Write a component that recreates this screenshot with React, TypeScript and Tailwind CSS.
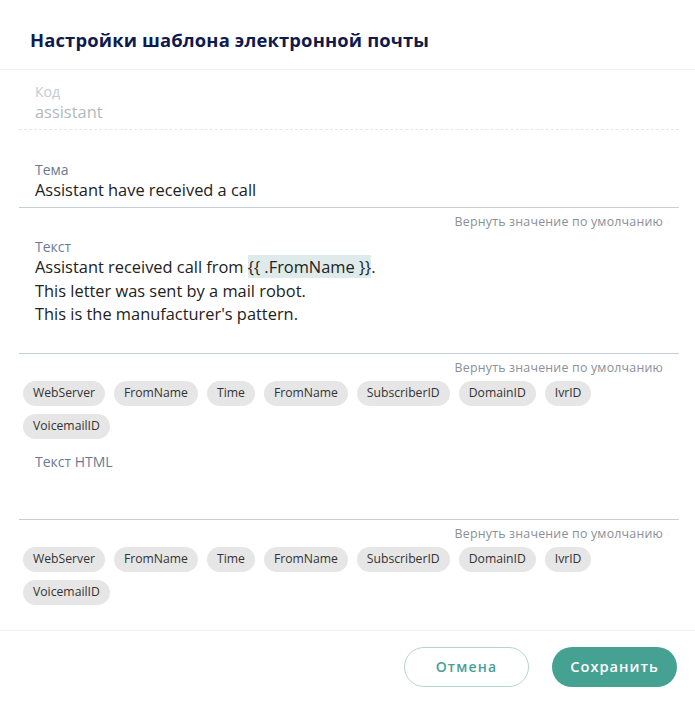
import React from "react";

const tags = ["WebServer", "FromName", "Time", "FromName", "SubscriberID", "DomainID", "IvrID", "VoicemailID"];

function Chips() {
  return (
    <div className="flex flex-wrap gap-x-[9px] gap-y-[8px] px-[4px] pt-[5px]">
      {tags.map((t, i) => (
        <span
          key={i}
          className="h-[25px] px-[10px] rounded-full bg-[#e6e6e6] text-[12.2px] text-[#333] flex items-center leading-none"
        >
          {t}
        </span>
      ))}
    </div>
  );
}

function Reset() {
  return (
    <div className="text-right pr-[16px] pt-[6px] text-[12.4px] leading-[16px] text-[#8a9099] tracking-[0.2px]">
      Вернуть значение по умолчанию
    </div>
  );
}

export default function App() {
  return (
    <div className="w-[695px] h-[704px] bg-white flex flex-col" style={{ fontFamily: '"Open Sans", "Noto Sans", sans-serif' }}>
      <div className="h-[70px] border-b border-[#eef0f2] flex items-center pl-[30px] pt-[10px]">
        <h1 className="text-[18.4px] font-bold text-[#0f1a4d] tracking-[0.15px]">Настройки шаблона электронной почты</h1>
      </div>
      <div className="flex-1 pl-[19px] pr-[16px]">
        <div className="px-[16px] pt-[13px] pb-[6px] border-b border-dashed border-[#e3e6ea]">
          <div className="text-[14px] leading-[18px] text-[#c3cad4]">Код</div>
          <div className="text-[16.4px] leading-[22px] text-[#b5b8bc]">assistant</div>
        </div>
        <div className="mt-[31px] px-[16px] pb-[6px] border-b border-[#c8ced6]">
          <div className="text-[14px] leading-[18px] text-[#6c7a96]">Тема</div>
          <div className="text-[16.4px] leading-[22px] text-[#222]">Assistant have received a call</div>
        </div>
        <Reset />
        <div className="px-[16px] pt-[9px] pb-[27px] border-b border-[#c8ced6]">
          <div className="text-[14px] leading-[16px] text-[#6c7a96]">Текст</div>
          <div className="text-[16.4px] leading-[23.5px] text-[#222]">
            <div>
              Assistant received call from <span className="bg-[#deebea]">{"{{ .FromName }}"}</span>.
            </div>
            <div>This letter was sent by a mail robot.</div>
            <div>This is the manufacturer's pattern.</div>
          </div>
        </div>
        <Reset />
        <Chips />
        <div className="px-[16px] pt-[14px] pb-[48px] border-b border-[#c8ced6]">
          <div className="text-[14px] leading-[18px] text-[#6c7a96]">Текст HTML</div>
        </div>
        <Reset />
        <Chips />
      </div>
      <div className="h-[74px] border-t border-[#eef0f2] flex items-center justify-end gap-[23px] pr-[18px] pb-[2px]">
        <button className="w-[125px] h-[40px] rounded-full border border-[#b6d4d6] text-[#4a9e98] text-[14px] font-semibold tracking-[1.2px] bg-white">
          Отмена
        </button>
        <button className="w-[125px] h-[40px] rounded-full bg-[#45a192] text-white text-[14.6px] font-semibold tracking-[1px]">
          Сохранить
        </button>
      </div>
    </div>
  );
}
